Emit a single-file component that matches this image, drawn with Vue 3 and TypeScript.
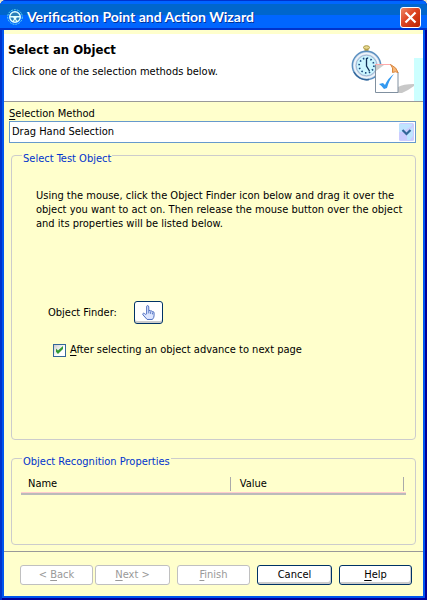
<script setup lang="ts">
import { ref } from 'vue'

const methods: string[] = ['Drag Hand Selection', 'Test Object Browser', 'Time Delayed Selection']
const method = ref<string>(methods[0])
const advance = ref<boolean>(true)
</script>

<template>
  <main class="window">
    <header class="titlebar">
      <svg class="wheel" viewBox="0 0 16 16" aria-hidden="true">
        <circle cx="8" cy="8" r="7.3" fill="none" stroke="#66ddee" stroke-width="1" stroke-dasharray="2 1" />
        <circle cx="8" cy="8" r="5.3" fill="#2a7fb8" stroke="#e0ffff" stroke-width="1.4" />
        <path d="M3 7h10v1.500H9.800l-.800 1.500 2 3h-1.500L8 10.500 6.500 13H5l2-3-.800-1.500H3z" fill="#e4ffff" />
      </svg>
      <h1 class="title">Verification Point and Action Wizard</h1>
      <button type="button" class="close" aria-label="Close">
        <svg viewBox="0 0 19 19" aria-hidden="true">
          <path d="M4.500 4.500l10 10M14.500 4.500l-10 10" stroke="#fff" stroke-width="2.2" fill="none" />
        </svg>
      </button>
    </header>

    <div class="client">
      <section class="banner">
        <div class="intro">
          <h2 class="heading">Select an Object</h2>
          <p class="hint">Click one of the selection methods below.</p>
        </div>
        <svg class="art" viewBox="0 0 72 67" aria-hidden="true">
          <path d="M63 24h9v43h-9z" fill="#ccffff" />
          <path d="M47 59v-6q5-3 16-3v2l-6 4-6 3z" fill="#c8c8c8" />
          <ellipse cx="15.500" cy="13.500" rx="3" ry="1.800" fill="#e8d890" stroke="#a89840" />
          <path d="M13.500 15h4v4h-4z" fill="#b8a048" />
          <circle cx="15.500" cy="31.500" r="14.200" fill="#c4d8ea" stroke="#5b8fc0" stroke-width="1.400" />
          <circle cx="15.500" cy="31.500" r="12" fill="none" stroke="#f0f4fa" stroke-width="1.500" />
          <circle cx="15.500" cy="31.500" r="10.300" fill="#ccf6ff" stroke="#99aacc" stroke-width=".8" />
          <path d="M3 38a14 14 0 0 0 15 7.500" fill="none" stroke="#336699" stroke-width="1.300" />
          <circle cx="15.500" cy="31.500" r="7.400" fill="none" stroke="#1c4a80" stroke-width="1.700" stroke-dasharray="1.500 2.375" />
          <path d="M15.500 24v8l3 5" fill="none" stroke="#103058" stroke-width="1.300" />
          <path d="M24.500 30.500h15l7.500 7.500v20.500h-22.500z" fill="#fff" stroke="#8090a0" />
          <path d="M24 30.500h16" stroke="#ffaaaa" />
          <path d="M25 31h8l-8 6z" fill="#ccc" />
          <path d="M39.500 30.500q3 3 2 8 3-1.500 5.500 0-1-5-7.500-8z" fill="#f7b878" stroke="#d98740" />
          <path d="M28 50l4-1 2 2q3-7 9-11-5 6-7 14l-3 1q-2-3-5-5z" fill="#3399f0" />
        </svg>
      </section>

      <form class="body" @submit.prevent>
        <label class="caption" for="method"><u>S</u>election Method</label>
        <div class="combo">
          <select id="method" v-model="method">
            <option v-for="m in methods" :key="m" :value="m">{{ m }}</option>
          </select>
          <svg class="arrow" viewBox="0 0 15 18" aria-hidden="true">
            <rect width="15" height="18" rx="1.500" fill="#ccccff" />
            <path d="M0 1h13v2L3 9H0zM8 17V9l6-5v9l-3 4z" fill="#c0e4ff" />
            <path d="M3.500 7l4 4 4-4" fill="none" stroke="#336699" stroke-width="2.200" />
          </svg>
        </div>

        <fieldset class="group finder">
          <legend>Select Test Object</legend>
          <p class="explain">
            Using the mouse, click the Object Finder icon below and drag it over the<br />
            object you want to act on. Then release the mouse button over the object<br />
            and its properties will be listed below.
          </p>
          <div class="pick">
            <label for="hand">Object Finder:</label>
            <button id="hand" type="button" class="hand">
              <svg viewBox="0 0 14 16" aria-hidden="true">
                <path d="M5 9.500V2q0-1.500 1-1.500T7.300 2v4q1.700-1 2 .500 1.500-.800 2 .600 1.700-.300 1.700 1.400v3q0 2-1.800 4H5.500L1 10.500q-.500-1.500.500-1.700 1-.200 2 1.200z" fill="#dde6ff" stroke="#4466bb" />
                <path d="M7.300 6v3M9.300 7v2.500M11.300 8v2" fill="none" stroke="#4466bb" stroke-width=".900" />
              </svg>
            </button>
          </div>
          <label class="tick">
            <input v-model="advance" type="checkbox" />
            <span><u>A</u>fter selecting an object advance to next page</span>
          </label>
        </fieldset>

        <fieldset class="group props">
          <legend>Object Recognition Properties</legend>
          <table class="grid">
            <thead>
              <tr>
                <th scope="col"><span>Name</span></th>
                <th scope="col"><span>Value</span></th>
              </tr>
            </thead>
          </table>
        </fieldset>
      </form>

      <footer class="actions">
        <button type="button" class="btn back" disabled>&lt; <u>B</u>ack</button>
        <button type="button" class="btn next" disabled><u>N</u>ext &gt;</button>
        <button type="button" class="btn finish" disabled><u>F</u>inish</button>
        <button type="button" class="btn cancel">Cancel</button>
        <button type="button" class="btn help"><u>H</u>elp</button>
      </footer>
    </div>
  </main>
</template>

<style>
body {
  background: #e8e4c8;
}
</style>

<style scoped>
* {
  box-sizing: border-box;
}

.window {
  display: flex;
  flex-direction: column;
  min-height: 100vh;
  padding: 0 4px 4px;
  border-radius: 6px 6px 0 0;
  background: #0055ee;
  box-shadow: inset 2px 0 #0033cc, inset -2px -2px #000099;
  color: #000;
  font: 11px/14px "DejaVu Sans Condensed", "Noto Sans", sans-serif;
}

h1, h2, p {
  margin: 0;
}

u {
  text-underline-offset: 2px;
}

.titlebar {
  display: flex;
  align-items: center;
  gap: 4px;
  height: 30px;
  margin: 0 -4px;
  padding: 4px 6px 0 7px;
  border-radius: 6px 6px 0 0;
  background: linear-gradient(#0033cc 0 1px, #0066ff 1px 4px, #0066cc 4px 15px, #0066ff 15px 28px, #0033cc 28px);
}

.wheel {
  flex: none;
  width: 16px;
  height: 16px;
}

.title {
  flex: 1;
  color: #fff;
  font: bold 14px/20px Lato, sans-serif;
  text-shadow: 1px 1px #003399;
  white-space: nowrap;
}

.close {
  flex: none;
  width: 21px;
  height: 21px;
  padding: 0;
  border: 1px solid #fff;
  border-radius: 3px;
  background: linear-gradient(135deg, #ee8866, #dd4422 45%, #bb2200);
}

.close svg {
  display: block;
  width: 19px;
  height: 19px;
}

.client {
  display: flex;
  flex: 1;
  flex-direction: column;
  padding-top: 4px;
  background: #ffffcc;
}

.banner {
  display: flex;
  justify-content: space-between;
  border-bottom: 1px solid #999;
  background: #fff;
}

.intro {
  padding: 8px 0 0 4px;
}

.heading {
  font: bold 13px/16px "DejaVu Sans Condensed", "Noto Sans", sans-serif;
}

.hint {
  padding: 7px 0 0 4px;
}

.art {
  flex: none;
  width: 72px;
  height: 67px;
}

.body {
  display: flex;
  flex: 1;
  flex-direction: column;
  padding: 5px 7px 6px 5px;
}

.caption {
  align-self: flex-start;
}

.combo {
  display: grid;
  align-items: center;
}

.combo > * {
  grid-area: 1 / 1;
}

.combo select {
  width: 100%;
  height: 22px;
  padding: 0 20px 0 2px;
  border: 1px solid #6699cc;
  border-radius: 0;
  appearance: none;
  background: #fff;
  color: #000;
  font: inherit;
}

.arrow {
  justify-self: end;
  width: 15px;
  height: 18px;
  margin-right: 2px;
  pointer-events: none;
}

.group {
  min-width: 0;
  margin: 0 0 0 2px;
  padding: 0 9px;
  border: 1px solid #ccc;
  border-radius: 4px;
}

.group legend {
  margin-left: 1px;
  padding: 8px 1px 0;
  color: #0033cc;
}

.finder {
  flex: 1;
  margin-top: 1px;
}

.explain {
  padding: 23px 0 0 15px;
}

.pick {
  display: flex;
  align-items: center;
  gap: 17px;
  padding: 70px 0 0 27px;
}

.hand {
  display: grid;
  place-items: center;
  width: 29px;
  height: 23px;
  padding: 0;
  border: 1px solid #003366;
  border-radius: 3px;
  background: #fff;
  box-shadow: inset 0 -2px #ccc;
}

.hand svg {
  width: 13px;
  height: 15px;
}

.tick {
  display: flex;
  align-items: center;
  gap: 4px;
  padding: 19px 0 0 32px;
}

.tick input {
  width: 13px;
  height: 13px;
  margin: 0;
  border: 1px solid #336699;
  appearance: none;
  background: linear-gradient(135deg, #ccc, #fff 60%);
}

.tick input:checked::before {
  display: block;
  width: 9px;
  height: 9px;
  margin: 1px;
  background: #339933;
  clip-path: polygon(11% 33%, 33% 55%, 89% 5%, 89% 40%, 33% 95%, 11% 70%);
  content: "";
}

.props {
  height: 98px;
  margin-top: 7px;
}

.grid {
  width: 100%;
  border-spacing: 0;
  table-layout: fixed;
}

.grid th {
  padding: 8px 2px 0 0;
  border-bottom: 2px solid #bbb;
  box-shadow: inset 0 -1px #ffcccc;
  font-weight: normal;
  text-align: left;
}

.grid th:first-child {
  width: 55%;
}

.grid span {
  display: block;
  margin-bottom: 2px;
  padding-left: 7px;
  border-right: 1px solid #aaa;
}

.actions {
  display: flex;
  padding: 13px 11px 11px 16px;
  border-top: 1px solid #999;
}

.btn {
  height: 20px;
  padding: 0;
  border: 1px solid #003366;
  border-radius: 3px;
  background: #fff;
  box-shadow: inset -1px -2px #ccc;
  color: #000;
  font: inherit;
  line-height: 16px;
}

.btn:disabled {
  border-color: #c0c0c0;
  box-shadow: none;
  color: #999;
}

.back,
.finish {
  flex: 73;
}

.next,
.cancel {
  flex: 75;
}

.help {
  flex: 73;
}

.next {
  margin-left: 2px;
}

.finish,
.cancel,
.help {
  margin-left: 7px;
}
</style>
